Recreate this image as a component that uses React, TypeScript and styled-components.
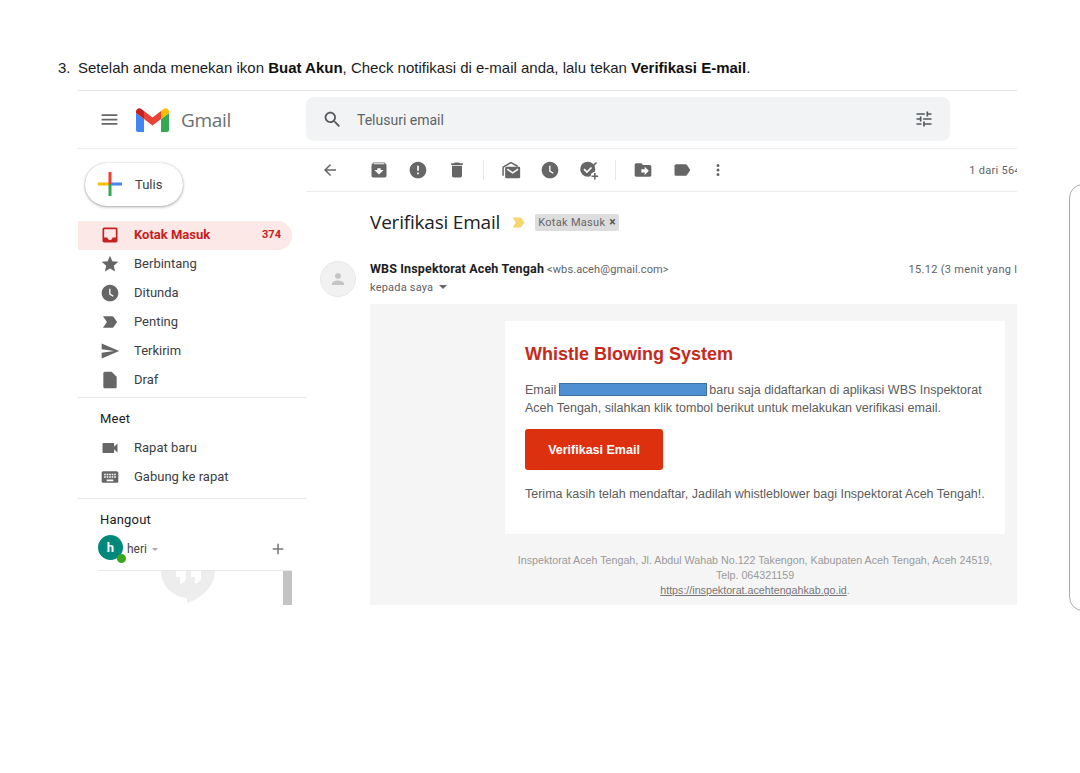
import React, { ReactElement } from 'react';
import styled, { createGlobalStyle } from 'styled-components';

const PATHS = {
  menu: 'M3 18h18v-2H3v2zm0-5h18v-2H3v2zm0-7v2h18V6H3z',
  search:
    'M15.5 14h-.79l-.28-.27C15.41 12.59 16 11.11 16 9.5 16 5.91 13.09 3 9.5 3S3 5.91 3 9.5 5.91 16 9.5 16c1.61 0 3.09-.59 4.23-1.57l.27.28v.79l5 4.99L20.49 19l-4.99-5zm-6 0C7.01 14 5 11.99 5 9.5S7.01 5 9.5 5 14 7.01 14 9.5 11.99 14 9.5 14z',
  tune: 'M3 17v2h6v-2H3zM3 5v2h10V5H3zm10 16v-2h8v-2h-8v-2h-2v6h2zM7 9v2H3v2h4v2h2V9H7zm14 4v-2H11v2h10zm-6-4h2V7h4V5h-4V3h-2v6z',
  back: 'M20 11H7.83l5.59-5.59L12 4l-8 8 8 8 1.41-1.41L7.83 13H20v-2z',
  archive:
    'M20.54 5.23l-1.39-1.68C18.88 3.21 18.47 3 18 3H6c-.47 0-.88.21-1.16.55L3.46 5.23C3.17 5.57 3 6.02 3 6.5V19c0 1.1.9 2 2 2h14c1.1 0 2-.9 2-2V6.5c0-.48-.17-.93-.46-1.27zM12 17.5L6.5 12H10v-2h4v2h3.5L12 17.5zM5.12 5l.81-1h12l.94 1H5.12z',
  error:
    'M12 2C6.48 2 2 6.48 2 12s4.48 10 10 10 10-4.48 10-10S17.52 2 12 2zm1 15h-2v-2h2v2zm0-4h-2V7h2v6z',
  trash: 'M6 19c0 1.1.9 2 2 2h8c1.1 0 2-.9 2-2V7H6v12zM19 4h-3.5l-1-1h-5l-1 1H5v2h14V4z',
  clock:
    'M12 2C6.47 2 2 6.48 2 12s4.47 10 10 10 10-4.48 10-10S17.53 2 12 2zm3.5 14.6L11 13.9V7h1.6v6l3.9 2.3-1 1.3z',
  plus: 'M19 13h-6v6h-2v-6H5v-2h6V5h2v6h6v2z',
  move: 'M20 6h-8l-2-2H4c-1.1 0-1.99.9-1.99 2L2 18c0 1.1.9 2 2 2h16c1.1 0 2-.9 2-2V8c0-1.1-.9-2-2-2zm-6 12v-3h-4v-4h4V8l5 5-5 5z',
  label:
    'M17.63 5.84C17.27 5.33 16.67 5 16 5L5 5.01C3.9 5.01 3 5.9 3 7v10c0 1.1.9 1.99 2 1.99L16 19c.67 0 1.27-.33 1.63-.84L22 12l-4.37-6.16z',
  more: 'M12 8a2 2 0 1 0 0-4 2 2 0 0 0 0 4zm0 2a2 2 0 1 0 0 4 2 2 0 0 0 0-4zm0 6a2 2 0 1 0 0 4 2 2 0 0 0 0-4z',
  inbox:
    'M19 3H5c-1.1 0-2 .9-2 2v14c0 1.1.9 2 2 2h14c1.1 0 2-.9 2-2V5c0-1.1-.9-2-2-2zm0 12h-4c0 1.66-1.35 3-3 3s-3-1.34-3-3H5V5h14v10z',
  star: 'M12 17.27L18.18 21l-1.64-7.03L22 9.24l-7.19-.61L12 2 9.19 8.63 2 9.24l5.46 4.73L5.82 21z',
  important:
    'M3.5 18.99l11 .01c.67 0 1.27-.33 1.63-.84L20.5 12l-4.37-6.16c-.36-.51-.96-.84-1.63-.84l-11 .01L8.34 12 3.5 18.99z',
  send: 'M2.01 21L23 12 2.01 3 2 10l15 2-15 2z',
  draft: 'M14 2H6c-1.1 0-1.99.9-1.99 2L4 20c0 1.1.89 2 1.99 2H18c1.1 0 2-.9 2-2V8l-6-6z',
  video:
    'M17 10.5V7c0-.55-.45-1-1-1H4c-.55 0-1 .45-1 1v10c0 .55.45 1 1 1h12c.55 0 1-.45 1-1v-3.5l4 4v-11l-4 4z',
  keyboard:
    'M20 5H4c-1.1 0-1.99.9-1.99 2L2 17c0 1.1.9 2 2 2h16c1.1 0 2-.9 2-2V7c0-1.1-.9-2-2-2zm-9 3h2v2h-2V8zm0 3h2v2h-2v-2zM8 8h2v2H8V8zm0 3h2v2H8v-2zm-1 2H5v-2h2v2zm0-3H5V8h2v2zm9 7H8v-2h8v2zm0-4h-2v-2h2v2zm0-3h-2V8h2v2zm3 3h-2v-2h2v2zm0-3h-2V8h2v2z',
  person:
    'M12 12c2.21 0 4-1.79 4-4s-1.79-4-4-4-4 1.79-4 4 1.79 4 4 4zm0 2c-2.67 0-8 1.34-8 4v2h16v-2c0-2.66-5.33-4-8-4z',
};

type IconName = keyof typeof PATHS;

function Icon({ name, size = 20, color = '#666' }: { name: IconName; size?: number; color?: string }): ReactElement {
  return (
    <svg width={size} height={size} viewBox="0 0 24 24" fill={color} style={{ flex: 'none' }}>
      <path d={PATHS[name]} />
    </svg>
  );
}

const GlobalStyle = createGlobalStyle`
  html, body {
    margin: 0;
    background: #fff;
  }
  body {
    font-family: Roboto, "Liberation Sans", sans-serif;
    overflow: hidden;
  }
`;

const Page = styled.div`
  position: relative;
  width: 1080px;
  height: 773px;
  overflow: hidden;
  padding-top: 59px;
  box-sizing: border-box;
`;

const Instruction = styled.div`
  display: flex;
  height: 18px;
  line-height: 18px;
  font-size: 15px;
  color: #1c1c1c;
  margin-left: 58px;
  font-family: "Liberation Sans", Arial, sans-serif;
  b {
    font-weight: 700;
    color: #111;
  }
`;

const Number = styled.span`
  width: 20px;
`;

const SidePanel = styled.div`
  position: absolute;
  left: 1069px;
  top: 184px;
  width: 40px;
  height: 427px;
  box-sizing: border-box;
  border: 1.5px solid #aaa;
  border-radius: 14px;
`;

const Shot = styled.div`
  margin: 13px 0 0 78px;
  width: 939px;
  height: 515px;
  overflow: hidden;
  border-top: 1px solid #e6e6e6;
  box-sizing: border-box;
  display: flex;
  flex-direction: column;
`;

const Header = styled.header`
  display: flex;
  align-items: center;
  flex: none;
  height: 58px;
  box-sizing: border-box;
  border-bottom: 1px solid #eceded;
  padding-left: 21px;
`;

const Logo = styled.div`
  display: flex;
  align-items: center;
  width: 207px;
  margin-left: 0;
  svg + svg {
    margin-left: 16px;
  }
`;

const Wordmark = styled.span`
  margin-left: 12px;
  font-family: "Open Sans", Roboto, sans-serif;
  font-size: 19px;
  letter-spacing: -0.3px;
  color: #6b6e72;
`;

const SearchBar = styled.div`
  display: flex;
  align-items: center;
  width: 644px;
  height: 44px;
  margin-bottom: 1px;
  padding: 0 16px 0 16px;
  box-sizing: border-box;
  background: #f1f3f4;
  border-radius: 8px;
  font-size: 14px;
  color: #5f6368;
  span {
    margin: 2px 0 0 14px;
    flex: 1;
  }
`;

const Columns = styled.div`
  display: flex;
  flex: 1;
  min-height: 0;
`;

const Sidebar = styled.aside`
  flex: none;
  width: 228px;
  display: flex;
  flex-direction: column;
`;

const Compose = styled.div`
  display: flex;
  align-items: center;
  width: 98px;
  height: 43px;
  margin: 14px 0 15px 7px;
  padding: 0 0 1px 13px;
  box-sizing: border-box;
  background: #fff;
  border-radius: 22px;
  box-shadow: 0 1px 3px rgba(60, 64, 67, 0.45), 0 0 1px rgba(60, 64, 67, 0.3);
  font-size: 13px;
  color: #3c4043;
  span {
    margin-left: 13px;
  }
`;

const NavItem = styled.div<{ $active?: boolean }>`
  display: flex;
  align-items: center;
  width: 214px;
  height: 29px;
  padding: 0 11px 2px 22px;
  box-sizing: border-box;
  font-size: 13px;
  border-radius: 0 15px 15px 0;
  color: ${(p) => (p.$active ? '#c5221f' : '#3c4043')};
  font-weight: ${(p) => (p.$active ? 700 : 400)};
  background: ${(p) => (p.$active ? '#fce8e6' : 'transparent')};
  span {
    margin-left: 14px;
    flex: 1;
  }
  em {
    font-style: normal;
    font-size: 11px;
  }
`;

const SideRule = styled.div<{ $top: number }>`
  height: 1px;
  background: #e6e7e8;
  margin-top: ${(p) => p.$top}px;
`;

const SectionTitle = styled.div`
  height: 29px;
  line-height: 27px;
  margin: 7px 0 0 22px;
  font-size: 13px;
  letter-spacing: 0.2px;
  color: #202124;
`;

const HangoutUser = styled.div`
  display: flex;
  align-items: center;
  width: 189px;
  height: 33px;
  margin: -3px 0 0 20px;
  padding: 0 5px 5px 0;
  box-sizing: content-box;
  border-bottom: 1px solid #e8e8e8;
  font-size: 12px;
  color: #444;
`;

const Avatar = styled.div`
  position: relative;
  width: 25px;
  height: 25px;
  margin-top: -2px;
  border-radius: 50%;
  background: #00897b;
  color: #fff;
  font-weight: 700;
  font-size: 13px;
  line-height: 25px;
  text-align: center;
  &::after {
    content: '';
    position: absolute;
    right: -3px;
    bottom: -3px;
    width: 9px;
    height: 9px;
    border-radius: 50%;
    background: #3aa61c;
  }
`;

const UserName = styled.span`
  margin-left: 4px;
  flex: 1;
  &::after {
    content: '';
    display: inline-block;
    margin-left: 5px;
    vertical-align: 2px;
    border: 3px solid transparent;
    border-top: 3px solid #aaa;
    border-bottom: 0;
  }
`;

const HangoutList = styled.div`
  display: flex;
  justify-content: space-between;
  width: 194px;
  flex: 1;
  min-height: 0;
  margin-left: 20px;
  overflow: hidden;
  padding-left: 63px;
  box-sizing: border-box;
`;

const ScrollThumb = styled.div`
  width: 9px;
  background: #c4c4c4;
`;

const Main = styled.main`
  flex: 1;
  min-width: 0;
  display: flex;
  flex-direction: column;
`;

const Toolbar = styled.div`
  display: flex;
  align-items: center;
  flex: none;
  height: 43px;
  box-sizing: border-box;
  border-bottom: 1px solid #eceded;
  padding-left: 4px;
`;

const ToolButton = styled.div<{ $gap?: number; $narrow?: boolean }>`
  flex: none;
  display: flex;
  align-items: center;
  justify-content: center;
  width: ${(p) => (p.$narrow ? 32 : 39)}px;
  margin-left: ${(p) => p.$gap ?? 0}px;
`;

const ToolSep = styled.div`
  flex: none;
  width: 1px;
  height: 20px;
  margin: 0 7px;
  background: #e8e8e8;
`;

const Pager = styled.span`
  flex: none;
  margin-left: auto;
  margin-right: -4px;
  font-size: 11px;
  letter-spacing: 0.3px;
  color: #5f6368;
`;

const SubjectRow = styled.div`
  display: flex;
  align-items: center;
  flex: none;
  height: 60px;
  margin-left: 64px;
`;

const Subject = styled.h1`
  margin: 0;
  font-family: "Open Sans", Roboto, sans-serif;
  font-size: 19px;
  font-weight: 400;
  letter-spacing: -0.2px;
  color: #202124;
`;

const Marker = styled.span`
  display: flex;
  margin: 0 8px 0 10px;
`;

const Chip = styled.span`
  display: flex;
  align-items: center;
  gap: 4px;
  height: 17px;
  padding: 0 3px;
  border-radius: 2px;
  background: #ddd;
  font-size: 11px;
  letter-spacing: 0.3px;
  color: #666;
  b {
    font-size: 12px;
    color: #555;
    font-weight: 700;
  }
`;

const MessageHead = styled.div`
  display: flex;
  flex: none;
  height: 52px;
  margin-left: 14px;
  padding-top: 9px;
  box-sizing: border-box;
`;

const SenderPhoto = styled.div`
  flex: none;
  display: flex;
  align-items: center;
  justify-content: center;
  width: 36px;
  height: 36px;
  border-radius: 50%;
  background: #f1f1f1;
  border: 1px solid #e8e8e8;
  box-sizing: border-box;
`;

const SenderInfo = styled.div`
  flex: 1;
  min-width: 0;
  margin: -1px 0 0 14px;
`;

const SenderLine = styled.div`
  display: flex;
  align-items: baseline;
  height: 18px;
  line-height: 18px;
  white-space: nowrap;
  font-size: 12.5px;
  b {
    color: #202124;
    letter-spacing: 0.15px;
  }
  small {
    margin-left: 3px;
    font-size: 11px;
    letter-spacing: 0.1px;
    color: #5f6368;
  }
`;

const SentAt = styled.span`
  margin-left: auto;
  margin-right: -20px;
  font-size: 11px;
  letter-spacing: 0.3px;
  color: #5f6368;
`;

const ToLine = styled.div`
  display: flex;
  align-items: center;
  height: 18px;
  font-size: 11px;
  letter-spacing: 0.2px;
  color: #5f6368;
  &::after {
    content: '';
    margin-left: 6px;
    border: 4px solid transparent;
    border-top: 4px solid #666;
    border-bottom: 0;
  }
`;

const MailBody = styled.div`
  flex: 1;
  margin-left: 64px;
  padding: 17px 12px 0 135px;
  background: #f5f5f5;
  font-family: "Liberation Sans", Arial, sans-serif;
`;

const MailCard = styled.div`
  height: 213px;
  padding: 22px 20px 0;
  box-sizing: border-box;
  background: #fff;
  color: #5c5c5c;
  font-size: 12.5px;
  line-height: 18px;
`;

const MailTitle = styled.h2`
  margin: 0 0 16px;
  font-size: 18px;
  line-height: 22px;
  font-weight: 700;
  color: #c7291b;
`;

const Redacted = styled.span`
  display: inline-block;
  width: 148px;
  height: 13px;
  margin: 0 2px 0 3px;
  vertical-align: -2px;
  background: #4f90d2;
  border: 1px solid #3e6f9e;
  box-sizing: border-box;
`;

const VerifyButton = styled.div`
  width: 138px;
  height: 41px;
  margin: 12px 0 15px;
  border-radius: 3px;
  background: #dc300e;
  color: #fff;
  font-weight: 700;
  font-size: 12.5px;
  line-height: 43px;
  text-align: center;
`;

const MailFooter = styled.div`
  margin-top: 19px;
  font-size: 10.7px;
  line-height: 15px;
  text-align: center;
  color: #9a9a9a;
  u {
    color: #777;
  }
`;

const Logomark = () => (
  <svg width="33" height="24" viewBox="0 0 33 24">
    <path d="M2 24h6V11L0 5v17c0 1.1.9 2 2 2z" fill="#4285f4" />
    <path d="M25 24h6c1.1 0 2-.9 2-2V5l-8 6z" fill="#34a853" />
    <path d="M8 11V3l8.5 6.4L25 3v8l-8.500 6.400z" fill="#ea4335" />
    <path d="M25 3v8l8-6V3.500C33 .8 29.800-.8 27.700 1z" fill="#fbbc04" />
    <path d="M0 3.500V5l8 6V3L5.300 1C3.200-.8 0 .8 0 3.500z" fill="#c5221f" />
  </svg>
);

const ColorPlus = () => (
  <svg width="24" height="24" viewBox="0 0 24 24">
    <rect x="0" y="10.500" width="12" height="3" fill="#fbbc04" />
    <rect x="12" y="10.500" width="12" height="3" fill="#4285f4" />
    <rect x="10.500" y="12" width="3" height="12" fill="#34a853" />
    <rect x="10.500" y="0" width="3" height="12" fill="#ea4335" />
  </svg>
);

const UnreadIcon = () => (
  <svg width="20" height="20" viewBox="0 0 24 24">
    <rect x="5" y="8" width="18" height="14" rx="1.500" fill="#666" />
    <path d="M7.500 11l6.500 4.500 6.500-4.500" fill="none" stroke="#fff" strokeWidth="1.800" />
    <path d="M2.500 19V8.500L12 3l8 4.500" fill="none" stroke="#666" strokeWidth="1.800" />
  </svg>
);

const TaskIcon = () => (
  <svg width="20" height="20" viewBox="0 0 24 24">
    <circle cx="10.500" cy="11" r="9" fill="#666" />
    <path d="M6 11l3.500 3.500 5.500-5.500" fill="none" stroke="#fff" strokeWidth="2" />
    <path d="M15.500 8.500L21 3" fill="none" stroke="#666" strokeWidth="2" />
    <circle cx="19" cy="19.500" r="5" fill="#fff" />
    <path d="M19 15.500v8M15 19.500h8" fill="none" stroke="#666" strokeWidth="2" />
  </svg>
);

const HangoutBubble = () => (
  <svg width="54" height="60" viewBox="0 0 54 60" style={{ marginTop: -27 }}>
    <path d="M27 0a27 27 0 0 0-27 27c0 14 11 26 26 27v5c16-5 28-18 28-32A27 27 0 0 0 27 0z" fill="#ededed" />
    <path d="M15 25h10v8c0 4-3 6-6 7v-7h-4zM30 25h10v8c0 4-3 6-6 7v-7h-4z" fill="#fff" />
  </svg>
);

const NAV: { icon: IconName; label: string }[] = [
  { icon: 'star', label: 'Berbintang' },
  { icon: 'clock', label: 'Ditunda' },
  { icon: 'important', label: 'Penting' },
  { icon: 'send', label: 'Terkirim' },
  { icon: 'draft', label: 'Draf' },
];

export default function App(): ReactElement {
  return (
    <Page>
      <GlobalStyle />
      <Instruction>
        <Number>3.</Number>
        <span>
          Setelah anda menekan ikon <b>Buat Akun</b>, Check notifikasi di e-mail anda, lalu tekan{' '}
          <b>Verifikasi E-mail</b>.
        </span>
      </Instruction>

      <Shot>
        <Header>
          <Logo>
            <Icon name="menu" size={21} />
            <Logomark />
            <Wordmark>Gmail</Wordmark>
          </Logo>
          <SearchBar>
            <Icon name="search" size={21} color="#54585c" />
            <span>Telusuri email</span>
            <Icon name="tune" size={20} color="#54585c" />
          </SearchBar>
        </Header>

        <Columns>
          <Sidebar>
            <Compose>
              <ColorPlus />
              <span>Tulis</span>
            </Compose>
            <NavItem $active>
              <Icon name="inbox" color="#c5221f" />
              <span>Kotak Masuk</span>
              <em>374</em>
            </NavItem>
            {NAV.map((item) => (
              <NavItem key={item.label}>
                <Icon name={item.icon} />
                <span>{item.label}</span>
              </NavItem>
            ))}
            <SideRule $top={2} />
            <SectionTitle>Meet</SectionTitle>
            <NavItem>
              <Icon name="video" />
              <span>Rapat baru</span>
            </NavItem>
            <NavItem>
              <Icon name="keyboard" />
              <span>Gabung ke rapat</span>
            </NavItem>
            <SideRule $top={6} />
            <SectionTitle>Hangout</SectionTitle>
            <HangoutUser>
              <Avatar>h</Avatar>
              <UserName>heri</UserName>
              <Icon name="plus" size={18} color="#777" />
            </HangoutUser>
            <HangoutList>
              <HangoutBubble />
              <ScrollThumb />
            </HangoutList>
          </Sidebar>

          <Main>
            <Toolbar>
              <ToolButton>
                <Icon name="back" size={18} />
              </ToolButton>
              <ToolButton $gap={10}>
                <Icon name="archive" />
              </ToolButton>
              <ToolButton>
                <Icon name="error" />
              </ToolButton>
              <ToolButton>
                <Icon name="trash" />
              </ToolButton>
              <ToolSep />
              <ToolButton>
                <UnreadIcon />
              </ToolButton>
              <ToolButton>
                <Icon name="clock" />
              </ToolButton>
              <ToolButton>
                <TaskIcon />
              </ToolButton>
              <ToolSep />
              <ToolButton>
                <Icon name="move" />
              </ToolButton>
              <ToolButton>
                <Icon name="label" />
              </ToolButton>
              <ToolButton $narrow $gap={1}>
                <Icon name="more" size={18} />
              </ToolButton>
              <Pager>1 dari 564</Pager>
            </Toolbar>

            <SubjectRow>
              <Subject>Verifikasi Email</Subject>
              <Marker>
                <Icon name="important" size={17} color="#f5d76e" />
              </Marker>
              <Chip>
                Kotak Masuk <b>×</b>
              </Chip>
            </SubjectRow>

            <MessageHead>
              <SenderPhoto>
                <Icon name="person" size={18} color="#c4c4c4" />
              </SenderPhoto>
              <SenderInfo>
                <SenderLine>
                  <b>WBS Inspektorat Aceh Tengah</b>
                  <small>&lt;wbs.aceh@gmail.com&gt;</small>
                  <SentAt>15.12 (3 menit yang lalu)</SentAt>
                </SenderLine>
                <ToLine>kepada saya</ToLine>
              </SenderInfo>
            </MessageHead>

            <MailBody>
              <MailCard>
                <MailTitle>Whistle Blowing System</MailTitle>
                <div>
                  Email
                  <Redacted />
                  baru saja didaftarkan di aplikasi WBS Inspektorat Aceh Tengah, silahkan klik tombol berikut untuk
                  melakukan verifikasi email.
                </div>
                <VerifyButton>Verifikasi Email</VerifyButton>
                <div>Terima kasih telah mendaftar, Jadilah whistleblower bagi Inspektorat Aceh Tengah!.</div>
              </MailCard>
              <MailFooter>
                Inspektorat Aceh Tengah, Jl. Abdul Wahab No.122 Takengon, Kabupaten Aceh Tengah, Aceh 24519,
                <br />
                Telp. 064321159
                <br />
                <u>https://inspektorat.acehtengahkab.go.id</u>.
              </MailFooter>
            </MailBody>
          </Main>
        </Columns>
      </Shot>

      <SidePanel />
    </Page>
  );
}
